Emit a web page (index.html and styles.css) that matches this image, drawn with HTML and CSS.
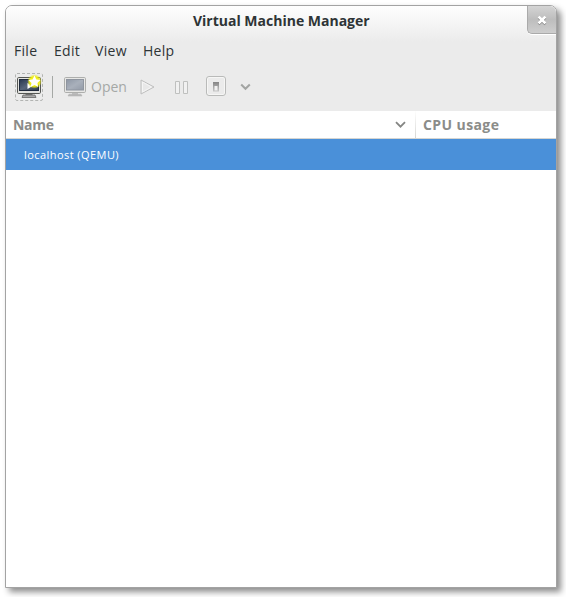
FILE: index.html
```html
<!DOCTYPE html>
<html lang="en">
<head>
<meta charset="utf-8">
<title>Virtual Machine Manager</title>
<link rel="stylesheet" href="styles.css">
</head>
<body>
<main class="window">
  <div class="chrome">
    <header class="titlebar">
      <h1><span>Virtual Machine Manager</span></h1>
      <button class="close" aria-label="Close">
        <svg width="12" height="12" viewBox="0 0 12 12"><path d="M2.6 3.6 9.4 10.4M9.4 3.6 2.6 10.4" stroke="#8c8c8c" stroke-width="2.6"/><path d="M2.6 2.6 9.4 9.4M9.4 2.6 2.6 9.4" stroke="#fff" stroke-width="2.6"/></svg>
      </button>
    </header>
    <nav class="menubar">
      <span class="file">File</span><span class="edit">Edit</span><span class="view">View</span><span class="help">Help</span>
    </nav>
    <div class="toolbar">
      <button class="new" aria-label="New virtual machine">
        <svg width="28" height="28" viewBox="0 0 28 28">
          <defs>
            <linearGradient id="screen" x1="0" y1="0" x2="1" y2="1"><stop offset="0" stop-color="#27364e"/><stop offset=".5" stop-color="#57657a"/><stop offset="1" stop-color="#27364c"/></linearGradient>
            <radialGradient id="glow"><stop offset="0" stop-color="#fffb50"/><stop offset=".65" stop-color="#f0ee12"/><stop offset="1" stop-color="#eeee10" stop-opacity="0"/></radialGradient>
            <linearGradient id="dim" x1="0" y1="0" x2="1" y2="1"><stop offset="0" stop-color="#8e97a5"/><stop offset=".5" stop-color="#a9b0bb"/><stop offset="1" stop-color="#929aa7"/></linearGradient>
          </defs>
          <rect x=".5" y=".5" width="27" height="27" rx="1.5" fill="none" stroke="#b2b4b2" stroke-dasharray="3 2"/>
          <path d="M10.5 20h7v2.5h-7z" fill="#777"/>
          <rect x="2.500" y="4.500" width="23" height="16" rx="1.200" fill="#e2e2df" stroke="#555753"/>
          <rect x="4.500" y="6.500" width="19" height="11" fill="url(#screen)" stroke="#202b3d"/>
          <path d="M8 22h12l1 2.500H7z" fill="#aaa" stroke="#666" stroke-width=".8"/>
          <path d="M12.500 10v6l5-3z" fill="#fff"/>
          <circle cx="19.500" cy="8.500" r="7.300" fill="url(#glow)"/>
          <path d="m19.500 2.600 1.800 3.800 4.200.6-3.100 2.900.8 4.200-3.700-2.100-3.800 2.100.8-4.200L13.400 7l4.200-.6z" fill="#fff"/>
        </svg>
      </button>
      <i class="separator"></i>
      <button class="open" aria-label="Open">
        <svg width="22" height="20" viewBox="0 0 22 20">
          <path d="M8 15h6v3H8z" fill="#c0c0c0"/>
          <rect x=".5" y=".5" width="21" height="15" rx="1.2" fill="#e7e7e5" stroke="#adaeac"/>
          <rect x="2.5" y="2.5" width="17" height="10.5" fill="url(#dim)" stroke="#8f959f"/>
          <path d="M5 17.2h12l1 1.800H4z" fill="#bbb" stroke="#aaa" stroke-width=".5"/>
        </svg>
        <span>Open</span>
      </button>
      <svg class="run" width="15" height="16" viewBox="0 0 15 16"><path d="M1 1v14l13-7z" fill="#e8e8e8" stroke="#bebfbe" stroke-linejoin="round"/><path d="M2.5 3v10l9-5z" fill="none" stroke="#f5f5f5"/></svg>
      <svg class="pause" width="13" height="13" viewBox="0 0 13 13"><path d="M.5.5h4v12h-4zM8.500.5h4v12h-4z" fill="#f1f1f1" stroke="#bfc0bf"/></svg>
      <svg class="power" width="20" height="20" viewBox="0 0 20 20">
        <defs><linearGradient id="switch" x1="0" y1="0" x2="0" y2="1"><stop offset="0" stop-color="#858585"/><stop offset="1" stop-color="#c6c6c6"/></linearGradient></defs>
        <rect x=".5" y=".5" width="19" height="19" rx="2.500" fill="#f6f6f5" stroke="#b9bab9"/><rect x="2" y="2" width="16" height="16" rx="1" fill="#ebebeb"/>
        <path d="M7 6h6v9.500H7z" fill="url(#switch)"/><path d="M8.500 10h3v4.500h-3z" fill="#f0f0f0"/>
      </svg>
      <svg class="more" width="11" height="8" viewBox="0 0 11 8"><path d="m1.200 1.500 4.300 4.300 4.300-4.300" fill="none" stroke="#a3a5a3" stroke-width="2"/></svg>
    </div>
  </div>
  <section class="list">
    <div class="columns">
      <div class="name"><span>Name</span><svg width="11" height="8" viewBox="0 0 11 8"><path d="m1 1.200 4.500 4.500L10 1.200" fill="none" stroke="#858684" stroke-width="1.800"/></svg></div>
      <div class="cpu"><span>CPU usage</span></div>
    </div>
    <div class="row"><span>localhost (QEMU)</span></div>
  </section>
</main>
</body>
</html>
```
FILE: styles.css
```css
* { box-sizing: border-box; }
body {
  margin: 0;
  padding: 5px 9px 9px 5px;
  height: 597px;
  overflow: hidden;
  background: #fff;
  color: #2e3436;
  font: 14px/20px "Open Sans", "Noto Sans", sans-serif;
}
button { border: 0; padding: 0; background: none; font: inherit; color: inherit; }
svg { display: block; flex: none; }
span { white-space: nowrap; }
.window {
  width: 552px;
  height: 583px;
  border: 1px solid #a3a3a3;
  border-radius: 7px 7px 0 0;
  background: #fff;
  box-shadow: 4px 4px 6px rgba(0, 0, 0, .45);
  overflow: hidden;
}
.chrome { height: 105px; background: linear-gradient(#fefefe, #ebebeb 36px); }
.titlebar { display: flex; height: 28px; }
h1 {
  flex: 1;
  margin: 0;
  padding: 5px 0 0 187px;
  font-size: 14px;
  line-height: 20px;
  font-weight: 700;
  letter-spacing: 0;
}
.close {
  display: flex;
  justify-content: center;
  padding-top: 8px;
  width: 29px;
  height: 28px;
  border: solid #aaa;
  border-width: 0 0 1px 1px;
  border-radius: 0 0 0 5px;
  background: linear-gradient(#d4d4d4, #bdbdbd 50%, #cecece);
  box-shadow: 0 1px #fff;
}
.menubar { display: flex; height: 34px; padding: 7px 0 0 8px; letter-spacing: .3px; }
.file { width: 40px; }
.edit { width: 41px; }
.view { width: 48px; }
.toolbar { display: flex; align-items: center; height: 38px; padding-left: 9px; }
.separator { width: 1px; height: 22px; margin-left: 9px; background: #a5a8a5; }
.open { display: flex; align-items: center; gap: 5px; width: 76px; margin-left: 11px; color: #a5a8a6; letter-spacing: 0; }
.run { margin-left: 0; }
.pause { margin-left: 20px; }
.power { margin: -2px 0 0 18px; }
.more { margin-left: 14px; }
.columns {
  display: flex;
  height: 28px;
  border-bottom: 1px solid #d5d5d2;
  color: #8b8c89;
  font-weight: 700;
  line-height: 28px;
}
.name {
  display: flex;
  align-items: center;
  justify-content: space-between;
  width: 410px;
  padding: 0 9px 0 7px;
  border-right: 1px solid;
  border-image: linear-gradient(#fff, #d5d5d2) 1;
  letter-spacing: -.3px;
}
.cpu { padding-left: 7px; letter-spacing: .4px; }
.row { height: 31px; padding-left: 18px; background: #4a90d9; color: #fff; font-size: 11px; line-height: 31px; letter-spacing: .44px; }
```
